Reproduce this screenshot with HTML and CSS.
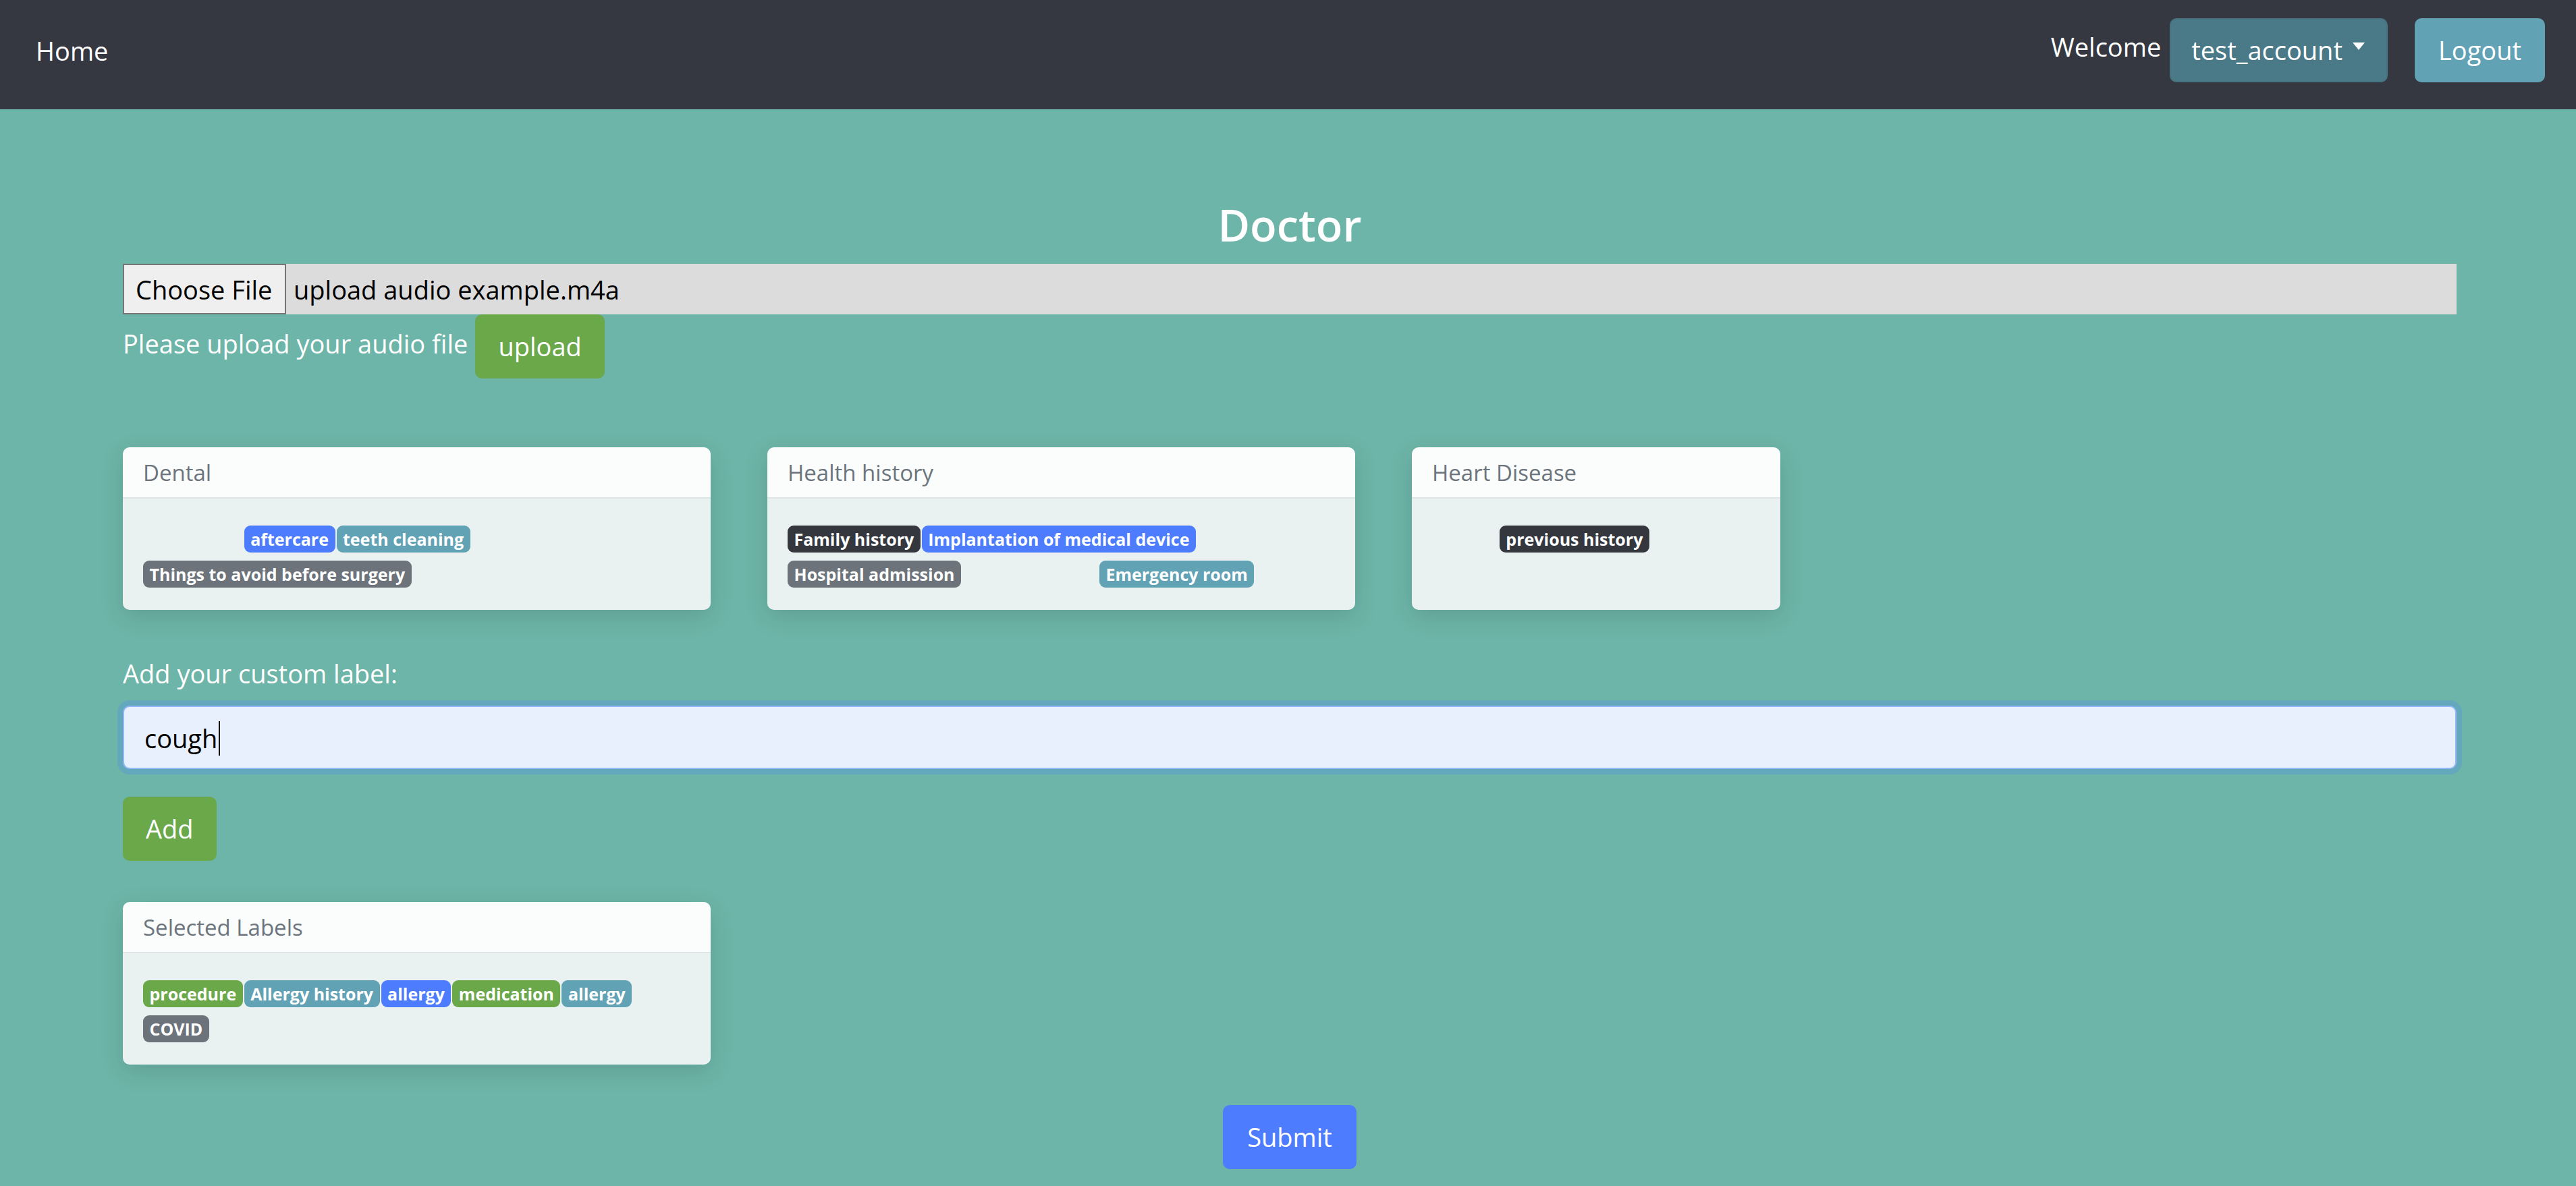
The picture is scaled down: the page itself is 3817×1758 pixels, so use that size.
FILE: index.html
```html
<!DOCTYPE html>
<html lang="en">
<head>
<meta charset="utf-8">
<title>Doctor</title>
<link rel="stylesheet" href="styles.css">
</head>
<body>
<nav class="navbar">
  <a class="nav-home" href="#">Home</a>
  <div class="nav-right">
    <span class="welcome">Welcome</span>
    <button class="btn btn-account">test_account<span class="caret"></span></button>
    <button class="btn btn-logout">Logout</button>
  </div>
</nav>

<main class="page">
  <h3 class="title">Doctor</h3>

  <div class="file-field">
    <span class="file-button">Choose File</span>
    <span class="file-name">upload audio example.m4a</span>
  </div>

  <div class="upload-row">
    <span class="upload-text">Please upload your audio file</span>
    <button class="btn btn-green">upload</button>
  </div>

  <div class="cards">
    <section class="card card-wide">
      <div class="card-header">Dental</div>
      <div class="card-body">
        <span class="badge b-green hidden">procedure</span>
        <span class="badge b-blue">aftercare</span>
        <span class="badge b-info">teeth cleaning</span>
        <span class="badge b-gray">Things to avoid before surgery</span>
      </div>
    </section>
    <section class="card card-wide">
      <div class="card-header">Health history</div>
      <div class="card-body">
        <span class="badge b-dark">Family history</span>
        <span class="badge b-blue">Implantation of medical device</span>
        <span class="badge b-gray">Hospital admission</span>
        <span class="badge b-info hidden">Allergy history</span>
        <span class="badge b-info">Emergency room</span>
      </div>
    </section>
    <section class="card card-narrow">
      <div class="card-header">Heart Disease</div>
      <div class="card-body">
        <span class="badge b-gray hidden">COVID</span>
        <span class="badge b-dark">previous history</span>
      </div>
    </section>
  </div>

  <div class="custom-label">Add your custom label:</div>
  <div class="text-input"><span class="input-value">cough</span><span class="input-caret"></span></div>
  <button class="btn btn-green btn-add">Add</button>

  <section class="card card-wide card-selected">
    <div class="card-header">Selected Labels</div>
    <div class="card-body">
      <span class="badge b-green">procedure</span>
      <span class="badge b-info">Allergy history</span>
      <span class="badge b-blue">allergy</span>
      <span class="badge b-green">medication</span>
      <span class="badge b-info">allergy</span>
      <span class="badge b-gray">COVID</span>
    </div>
  </section>

  <div class="submit-row">
    <button class="btn btn-blue">Submit</button>
  </div>
</main>
</body>
</html>
```

FILE: styles.css
```css
html, body {
  margin: 0;
  padding: 0;
}

body {
  background: #6db5a8;
  font-family: "Open Sans", "Noto Sans", sans-serif;
  font-size: 38px;
  line-height: 60px;
  color: #ffffff;
  overflow: hidden;
}

/* ---------- navbar ---------- */
.navbar {
  display: flex;
  align-items: center;
  height: 162px;
  box-sizing: border-box;
  padding: 27px 46px 40px 33px;
  background: #353841;
}

.nav-home {
  padding: 0 20px;
  color: #ffffff;
  text-decoration: none;
}

.nav-right {
  margin-left: auto;
  display: flex;
  align-items: center;
}

.welcome {
  margin-right: 13px;
  margin-bottom: 12px;
}

.btn {
  font-family: inherit;
  font-size: 38px;
  line-height: 61px;
  padding: 15px 32px;
  border: 2px solid transparent;
  border-radius: 10px;
  color: #ffffff;
  cursor: pointer;
  display: inline-flex;
  align-items: center;
}

.btn-account {
  background: #4a7a87;
  border-color: #477480;
  padding: 15px 32px 15px 30px;
}

.caret {
  display: inline-block;
  width: 0;
  height: 0;
  margin-left: 15px;
  margin-bottom: 12px;
  border-top: 11px solid #ffffff;
  border-left: 9px solid transparent;
  border-right: 9px solid transparent;
}

.btn-logout {
  background: #62a2b5;
  border-color: #62a2b5;
  margin-left: 40px;
  padding: 15px 33px;
}

.btn-green {
  background: #6aa84a;
  border-color: #6aa84a;
}

.btn-blue {
  background: #4d7cfe;
  border-color: #4d7cfe;
  padding: 15px 34px;
}

/* ---------- page ---------- */
.page {
  padding: 0 177px 0 182px;
}

.title {
  margin: 132px 0 19px;
  text-align: center;
  font-size: 65px;
  line-height: 78px;
  font-weight: 600;
}

.file-field {
  display: flex;
  height: 75px;
  background: #dcdcdc;
  color: #000000;
}

.file-button {
  display: flex;
  align-items: center;
  width: 242px;
  box-sizing: border-box;
  padding: 0 17px;
  background: #efefef;
  border: 2px solid #767676;
}

.file-name {
  display: flex;
  align-items: center;
  margin-left: 11px;
}

.upload-row {
  display: flex;
  align-items: flex-start;
}

.upload-text {
  padding-top: 13px;
  margin-right: 11px;
}

/* ---------- cards ---------- */
.cards {
  display: flex;
  align-items: stretch;
  gap: 84px;
  margin-top: 102px;
}

.card {
  display: flex;
  flex-direction: column;
  border-radius: 10px;
  overflow: hidden;
  box-shadow: 0 10px 36px rgba(0, 0, 0, 0.13);
}

.card-wide {
  width: 871px;
}

.card-narrow {
  width: 546px;
}

.card-header {
  padding: 12px 30px 10px;
  background: #fbfdfc;
  color: #6c757d;
  font-size: 33px;
  line-height: 52px;
  border-bottom: 2px solid #dde6e4;
}

.card-body {
  flex: 1;
  display: flex;
  flex-wrap: wrap;
  align-content: flex-start;
  column-gap: 2px;
  row-gap: 12px;
  padding: 40px 30px 33px;
  background: #eaf2f1;
}

.badge {
  display: inline-block;
  padding: 7px 9.5px 6px;
  font-size: 25px;
  line-height: 27px;
  font-weight: 700;
  border-radius: 9px;
  color: #ffffff;
  white-space: nowrap;
}

.hidden {
  visibility: hidden;
}

.b-green { background: #6aa84a; }
.b-info { background: #62a2b5; }
.b-blue { background: #4d7cfe; }
.b-gray { background: #6c737b; }
.b-dark { background: #34373e; }

/* ---------- custom label ---------- */
.custom-label {
  margin-top: 62px;
  margin-bottom: 18px;
  padding-top: 2px;
}

.text-input {
  display: flex;
  align-items: center;
  height: 94px;
  box-sizing: border-box;
  padding: 2px 30px 0;
  background: #e8f0fe;
  border: 2px solid #93b7f4;
  border-radius: 10px;
  box-shadow: 0 0 0 8px #63a8bc;
  color: #000000;
}

.input-caret {
  display: inline-block;
  width: 2px;
  height: 51px;
  margin-left: 2px;
  background: #000000;
}

.btn-add {
  margin-top: 41px;
}

.card-selected {
  margin-top: 61px;
}

.submit-row {
  display: flex;
  justify-content: center;
  margin-top: 60px;
}
```
